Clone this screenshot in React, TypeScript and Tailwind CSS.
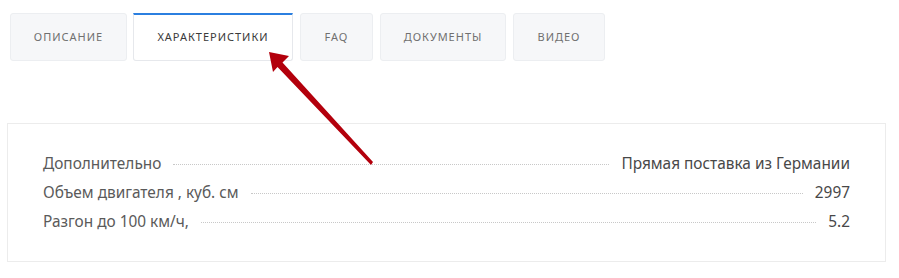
import React from "react";

const tabs = [
  { label: "ОПИСАНИЕ", w: "w-[117px]", active: false, ml: "ml-0" },
  { label: "ХАРАКТЕРИСТИКИ", w: "w-[160px]", active: true, ml: "ml-[6px]" },
  { label: "FAQ", w: "w-[73px]", active: false, ml: "ml-[7px]" },
  { label: "ДОКУМЕНТЫ", w: "w-[126px]", active: false, ml: "ml-[7px]" },
  { label: "ВИДЕО", w: "w-[92px]", active: false, ml: "ml-[7px]" },
];

const rows = [
  { k: "Дополнительно", v: "Прямая поставка из Германии" },
  { k: "Объем двигателя , куб. см", v: "2997" },
  { k: "Разгон до 100 км/ч,", v: "5.2" },
];

export default function App() {
  return (
    <div
      className="relative w-[899px] h-[278px] bg-white overflow-hidden"
      style={{ fontFamily: '"Noto Sans", "Open Sans", sans-serif' }}
    >
      <div className="flex pl-[10px] pt-[13px]">
        {tabs.map((t) => (
          <div
            key={t.label}
            className={`${t.w} ${t.ml} h-[48px] flex items-center justify-center rounded-[3px] border text-[11px] tracking-[0.09em] ${
              t.active
                ? "bg-white border-[#e6e8ec] border-t-2 border-t-[#2b7fe0] text-[#3a3a3a] rounded-t-none"
                : "bg-[#f6f7f9] border-[#eceef1] text-[#707070]"
            }`}
          >
            {t.label}
          </div>
        ))}
      </div>

      <div className="ml-[7px] mt-[62px] w-[879px] h-[139px] border border-[#ececec] px-[35px] pt-[25px]">
        {rows.map((r) => (
          <div key={r.k} className="flex items-center h-[29px] text-[15.4px] text-[#5a5a5a]">
            <span>{r.k}</span>
            <span className="flex-1 mx-[12px] mt-[2px] border-b border-dotted border-[#c8c8c8]" />
            <span className="text-[#484848]">{r.v}</span>
          </div>
        ))}
      </div>

      <svg
        className="absolute left-0 top-0 pointer-events-none"
        width="899"
        height="278"
        viewBox="0 0 899 278"
      >
        <polygon
          points="269,52 289,56 282.5,62.5 373,162 371,165 277.5,67 273,72"
          fill="#b3000c"
        />
      </svg>
    </div>
  );
}
